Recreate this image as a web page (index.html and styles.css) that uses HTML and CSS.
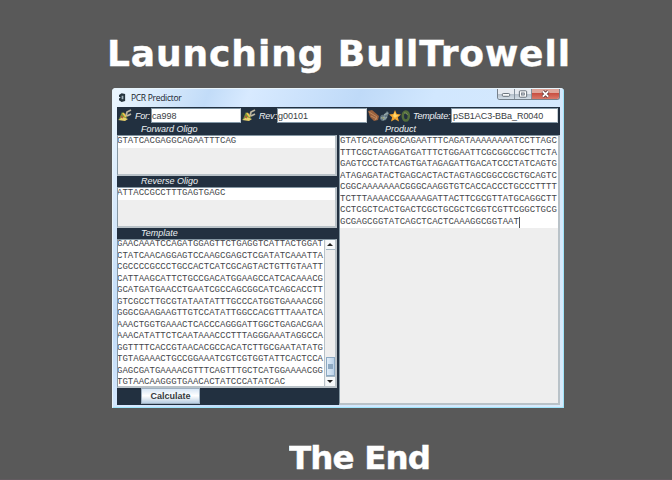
FILE: index.html
```html
<!DOCTYPE html>
<html lang="en">
<head>
<meta charset="utf-8">
<title>Launching BullTrowell</title>
<link rel="stylesheet" href="styles.css">
</head>
<body>
<h1><svg width="500" height="56"><text x="0" y="38" textLength="463" lengthAdjust="spacing">Launching BullTrowell</text></svg></h1>
<main class="window">
  <header class="titlebar">
    <svg class="app" viewBox="0 0 8 10"><path d="M3 0L7 1V9L3 10L0 8V6L2 5L0 4V2Z" fill="#26343e"/><path d="M3 3H5V7H3Z" fill="#a4b6c2"/></svg>
    <span class="name">PCR Predictor</span>
    <div class="controls">
      <span><svg viewBox="0 0 16 11"><rect x="4" y="5" width="8" height="3" rx="1" fill="#fff" stroke="#59636d"/></svg></span>
      <span><svg viewBox="0 0 16 11"><rect x="4" y="2" width="8" height="7" rx="1" fill="#fff" stroke="#59636d"/><rect x="6.5" y="4.3" width="3" height="2.4" fill="#b7bec6" stroke="#59636d" stroke-width=".7"/></svg></span>
      <span class="close"><svg viewBox="0 0 26 11"><path d="M10 2.5L16 8.5M16 2.5L10 8.5" stroke="#6a3b3b" stroke-width="3.8"/><path d="M10 2.5L16 8.5M16 2.5L10 8.5" stroke="#fff" stroke-width="2"/></svg></span>
    </div>
  </header>
  <section class="content">
    <div class="toolbar">
      <svg class="tool" viewBox="0 0 14 13"><path d="M1 10L4 3L9 8L7 11Z" fill="#75953a"/><path d="M0 11L5 8L10 10L7 12Z" fill="#e8d06a"/><path d="M5 4L8 8" stroke="#efc34a" stroke-width="2"/><path d="M3 7L5 9" stroke="#b9533a" stroke-width="1.5"/><path d="M8 7L9 3L13 1M9 7L13 5" fill="none" stroke="#bcb59f" stroke-width="1.8"/></svg>
      <label class="for">For:</label><span class="field">ca998</span>
      <svg class="tool" viewBox="0 0 14 13"><path d="M1 10L4 3L9 8L7 11Z" fill="#75953a"/><path d="M0 11L5 8L10 10L7 12Z" fill="#e8d06a"/><path d="M5 4L8 8" stroke="#efc34a" stroke-width="2"/><path d="M3 7L5 9" stroke="#b9533a" stroke-width="1.5"/><path d="M8 7L9 3L13 1M9 7L13 5" fill="none" stroke="#bcb59f" stroke-width="1.8"/></svg>
      <label class="rev">Rev:</label><span class="field">g00101</span>
      <svg class="parts" viewBox="0 0 45 14"><path d="M1 2L5 1L12 7L11 11L7 12L3 8Z" fill="#99613d"/><path d="M2 3L10 8L8 11M4 7L10 10" fill="none" stroke="#c08b60"/><path d="M13 10Q13 5 17 6L20 2L22 4L19 11L15 12Z" fill="#61747f"/><path d="M14 9L18 8M17 6L21 4M16 11L20 8" stroke="#91a4a7" stroke-width="1.4"/><path d="M15 8L17 10" stroke="#9b9d5c"/><path d="M28 1L29.7 5L34 5.5L30.8 8.2L32 12.5L28 10.2L24 12.5L25.2 8.2L22 5.5L26.3 5Z" fill="#f5a52d"/><path d="M28 3L29 6L32 6.5L29 8L28 9L26 7Z" fill="#ffd66a"/><ellipse cx="38.8" cy="7" rx="3" ry="4.5" fill="none" stroke="#536e3c" stroke-width="2.5"/><path d="M37 4Q40 3 40.5 6" fill="none" stroke="#83985a"/></svg>
      <label class="template">Template:</label><span class="field wide">pSB1AC3-BBa_R0040</span>
    </div>
    <div class="columns">
      <div class="left">
        <h2>Forward Oligo</h2>
        <div class="area oligo"><pre>GTATCACGAGGCAGAATTTCAG</pre></div>
        <h2>Reverse Oligo</h2>
        <div class="area oligo"><pre>ATTACCGCCTTTGAGTGAGC</pre></div>
        <h2>Template</h2>
        <div class="area sequence"><pre>GAACAAATCCAGATGGAGTTCTGAGGTCATTACTGGAT
CTATCAACAGGAGTCCAAGCGAGCTCGATATCAAATTA
CGCCCCGCCCTGCCACTCATCGCAGTACTGTTGTAATT
CATTAAGCATTCTGCCGACATGGAAGCCATCACAAACG
GCATGATGAACCTGAATCGCCAGCGGCATCAGCACCTT
GTCGCCTTGCGTATAATATTTGCCCATGGTGAAAACGG
GGGCGAAGAAGTTGTCCATATTGGCCACGTTTAAATCA
AAACTGGTGAAACTCACCCAGGGATTGGCTGAGACGAA
AAACATATTCTCAATAAACCCTTTAGGGAAATAGGCCA
GGTTTTCACCGTAACACGCCACATCTTGCGAATATATG
TGTAGAAACTGCCGGAAATCGTCGTGGTATTCACTCCA
GAGCGATGAAAACGTTTCAGTTTGCTCATGGAAAACGG
TGTAACAAGGGTGAACACTATCCCATATCAC</pre>
          <div class="scroll"><i class="up"></i><b></b><i class="down"></i></div>
        </div>
        <div class="actions"><button>Calculate</button></div>
      </div>
      <div class="right">
        <h2>Product</h2>
        <div class="area product"><pre>GTATCACGAGGCAGAATTTCAGATAAAAAAAATCCTTAGC
TTTCGCTAAGGATGATTTCTGGAATTCGCGGCCGCTTCTA
GAGTCCCTATCAGTGATAGAGATTGACATCCCTATCAGTG
ATAGAGATACTGAGCACTACTAGTAGCGGCCGCTGCAGTC
CGGCAAAAAAACGGGCAAGGTGTCACCACCCTGCCCTTTT
TCTTTAAAACCGAAAAGATTACTTCGCGTTATGCAGGCTT
CCTCGCTCACTGACTCGCTGCGCTCGGTCGTTCGGCTGCG
GCGAGCGGTATCAGCTCACTCAAAGGCGGTAAT<span class="caret"></span></pre></div>
      </div>
    </div>
  </section>
</main>
<p class="ending"><svg width="180" height="41"><text x="0" y="30" textLength="142" lengthAdjust="spacing">The End</text></svg></p>
</body>
</html>
```
FILE: styles.css
```css
* { box-sizing: border-box; }
body { margin: 0; width: 672px; height: 480px; overflow: hidden; background: #595959; border-bottom: 1px solid #625b60; font-family: "Liberation Sans", Arial, sans-serif; }
svg { display: block; flex: none; }
h1 { margin: 0; height: 88px; padding: 28px 0 0 107px; }
h1 text, .ending text { font-family: "DejaVu Sans", sans-serif; font-weight: bold; fill: #fff; stroke: #fff; stroke-width: .4px; }
h1 text { font-size: 36px; }
.window { width: 452px; height: 320px; margin-left: 112px; padding: 0 4px 3px 5px; border-radius: 4px 4px 1px 1px; background: linear-gradient(112deg, #edf7ff 0, #c2dcf8 17%, #d8eaff 24%, #bfdaf8 43%, #d1e7fe 56%, #d9eafb 100%); box-shadow: inset 1px 1px #e8f4fb, inset -1px -1px #9fe4fa; }
.titlebar { height: 19px; display: flex; align-items: center; padding-left: 2px; }
.app { width: 7px; height: 9px; }
.name { margin-left: 5px; font-family: "Open Sans", sans-serif; font-size: 8.5px; color: #17212b; letter-spacing: -.3px; }
.controls { display: flex; align-self: flex-start; margin: 1px 0 0 auto; height: 11px; border: 1px solid #76818b; border-top: 0; border-radius: 0 0 3px 3px; overflow: hidden; }
.controls span { width: 17px; height: 10px; background: linear-gradient(#e6eaf0 45%, #b5bfca 50%, #d4dfe8); border-right: 1px solid #84909c; }
.controls .close { width: 27px; border: 0; background: linear-gradient(#dfa69b 40%, #c95042 45%, #d8796a); }
.controls svg { width: 100%; height: 10px; }
.content { height: 298px; background: #223040; }
.toolbar { height: 17px; display: flex; align-items: center; }
.toolbar label { color: #eef1f4; font-size: 9px; font-style: italic; letter-spacing: -.15px; white-space: nowrap; }
.tool { width: 14px; height: 13px; margin-left: 1px; }
.toolbar .for { width: 19px; padding-left: 3px; letter-spacing: -.3px; }
.toolbar .rev { width: 21px; padding-left: 3px; letter-spacing: -.2px; }
.toolbar .template { width: 39px; padding-left: 1px; letter-spacing: -.22px; }
.parts { width: 45px; height: 14px; }
.field { width: 90px; height: 15px; border: 1px solid #8398a7; border-right-color: #c9d1d6; background: #fff; color: #393d42; font-size: 9px; line-height: 14px; white-space: nowrap; }
.wide { width: 107px; padding-left: 1px; letter-spacing: -.05px; }
.columns { display: grid; grid-template-columns: 220px 221px; column-gap: 2px; height: 281px; }
h2 { margin: 0; height: 11px; padding-left: 24px; color: #edf0f3; font-size: 9px; line-height: 11px; font-weight: normal; font-style: italic; }
.right h2 { padding-left: 46px; }
.area { background: #eee; border: 1px solid #8698a4; border-right: 2px solid #b9c2c8; border-bottom: 2px solid #b9c2c8; overflow: hidden; }
pre { margin: 0; background: #fff; color: #44464a; font-family: "Liberation Mono", "Courier New", monospace; font-size: 9px; line-height: 11.5px; letter-spacing: .02px; }
.left pre { margin-left: -1px; }
.oligo { height: 41px; }
.sequence { height: 149px; display: flex; background: #fff; }
.sequence pre { flex: 1; margin-top: -1px; }
.scroll { width: 11px; display: flex; flex-direction: column; align-items: center; background: #eee; border-left: 1px solid #b8c2c9; flex: none; }
.scroll i { width: 9px; height: 10px; display: flex; align-items: center; justify-content: center; background: #f6f9fb; border: solid #a6b7c4; border-width: 0 0 1px; }
.scroll i::before { content: ""; border: solid transparent; border-width: 0 3px 3px; border-bottom-color: #222; }
.scroll .down { border-width: 1px 0 0; }
.scroll .down::before { border-width: 3px 3px 0; border-top-color: #222; }
.scroll b { width: 9px; height: 19px; margin-top: auto; padding: 6px 1px; border: 1px solid #8daac4; background: linear-gradient(90deg, #e1edf8, #b9d1e8); }
.scroll b::before { content: ""; display: block; height: 5px; background: #8da8c1; }
.actions { height: 17px; padding-left: 24px; }
button { display: block; width: 59px; height: 16px; padding: 0; border: 1px solid #9eb0c1; background: linear-gradient(#d7e6f5, #fff 48%, #b9cee2); color: #343940; font: bold 9px/13px "Liberation Sans", Arial, sans-serif; }
.product { height: 270px; }
.caret { display: inline-block; width: 1px; height: 11px; background: #555; vertical-align: top; }
.ending { margin: 0; padding: 31px 0 0 289px; }
.ending text { font-size: 32.5px; }
```
